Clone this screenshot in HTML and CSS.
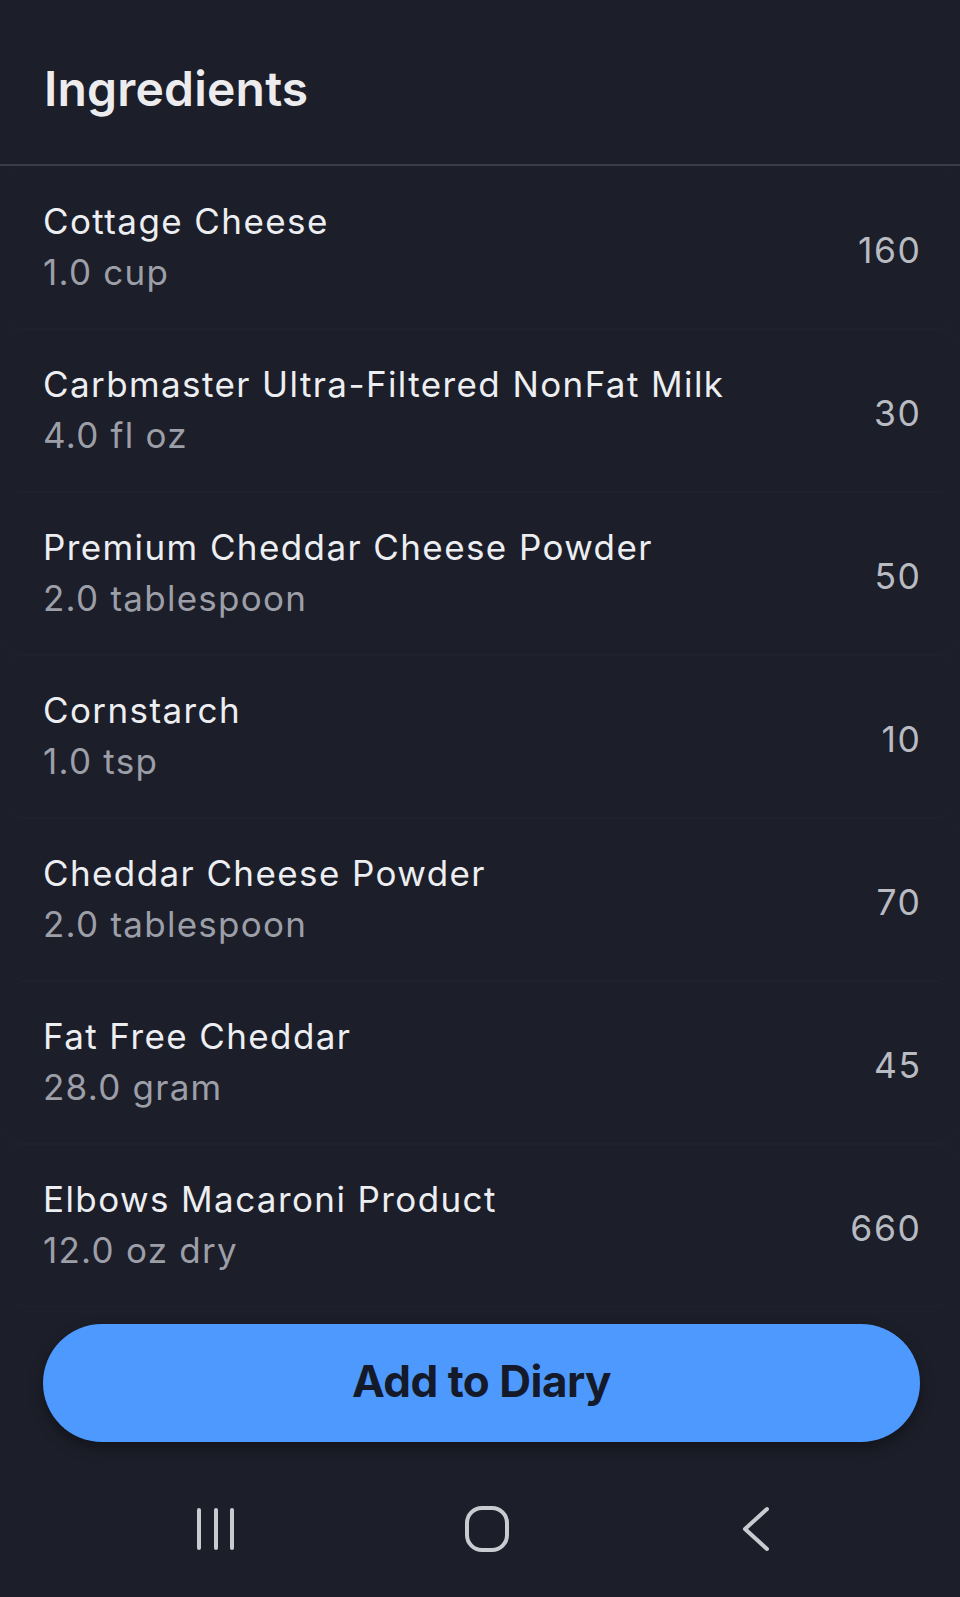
FILE: index.html
```html
<!DOCTYPE html>
<html lang="en">
<head>
<meta charset="utf-8">
<title>Ingredients</title>
<link rel="stylesheet" href="styles.css">
</head>
<body>
<div class="screen">
  <header class="header">
    <h1 class="title">Ingredients</h1>
  </header>
  <ul class="list">
    <li class="row"><div class="info"><div class="name">Cottage Cheese</div><div class="amount">1.0 cup</div></div><div class="cal">160</div></li>
    <li class="row"><div class="info"><div class="name">Carbmaster Ultra-Filtered NonFat Milk</div><div class="amount">4.0 fl oz</div></div><div class="cal">30</div></li>
    <li class="row"><div class="info"><div class="name">Premium Cheddar Cheese Powder</div><div class="amount">2.0 tablespoon</div></div><div class="cal">50</div></li>
    <li class="row"><div class="info"><div class="name">Cornstarch</div><div class="amount">1.0 tsp</div></div><div class="cal">10</div></li>
    <li class="row"><div class="info"><div class="name">Cheddar Cheese Powder</div><div class="amount">2.0 tablespoon</div></div><div class="cal">70</div></li>
    <li class="row"><div class="info"><div class="name">Fat Free Cheddar</div><div class="amount">28.0 gram</div></div><div class="cal">45</div></li>
    <li class="row"><div class="info"><div class="name">Elbows Macaroni Product</div><div class="amount">12.0 oz dry</div></div><div class="cal">660</div></li>
  </ul>
  <div class="actions">
    <button class="add-btn">Add to Diary</button>
  </div>
  <nav class="navbar">
    <svg class="nav-icon" width="44" height="44" viewBox="0 0 44 44" aria-label="Recent apps">
      <g stroke="#c9cbd1" stroke-width="4" stroke-linecap="round" fill="none">
        <line x1="4" y1="3" x2="4" y2="41"/>
        <line x1="21" y1="3" x2="21" y2="41"/>
        <line x1="37" y1="3" x2="37" y2="41"/>
      </g>
    </svg>
    <svg class="nav-icon home" width="46" height="46" viewBox="0 0 46 46" aria-label="Home">
      <rect x="3" y="2" width="40" height="42" rx="15" ry="15" stroke="#c9cbd1" stroke-width="4" fill="none"/>
    </svg>
    <svg class="nav-icon" width="30" height="46" viewBox="0 0 30 46" aria-label="Back">
      <polyline points="26,3 4,23 26,43" stroke="#c9cbd1" stroke-width="4" stroke-linecap="round" stroke-linejoin="round" fill="none"/>
    </svg>
  </nav>
</div>
</body>
</html>
```

FILE: styles.css
```css
* { box-sizing: border-box; }

html, body {
  margin: 0;
  padding: 0;
  background: #1c1e29;
}

body {
  font-family: Inter, "Noto Sans", "Liberation Sans", sans-serif;
  color: #e8e9ed;
}

.screen {
  width: 960px;
  height: 1597px;
  display: flex;
  flex-direction: column;
  overflow: hidden;
}

.header {
  height: 166px;
  flex-shrink: 0;
  border-bottom: 2px solid #3a3d49;
  padding: 0 44px;
}

.title {
  margin: 0;
  padding-top: 60px;
  font-size: 48px;
  line-height: 1.21;
  font-weight: 600;
  color: #ececef;
  letter-spacing: 0.2px;
}

.list {
  list-style: none;
  margin: 0;
  padding: 0;
}

.row {
  height: 163px;
  display: flex;
  align-items: center;
  justify-content: space-between;
  padding: 0 43px 0 46px;
  border: 1px solid rgba(255, 255, 255, 0.015);
  border-radius: 30px;
  margin: 0 -4px;
}

.info {
  display: flex;
  flex-direction: column;
  padding-bottom: 1px;
}

.name {
  font-size: 35px;
  line-height: 51px;
  color: #eceef1;
  letter-spacing: 1.4px;
}

.amount {
  font-size: 35px;
  line-height: 51px;
  color: #9c9fa8;
  letter-spacing: 1.25px;
}

.cal {
  font-size: 35.5px;
  line-height: 51px;
  color: #b9bbc2;
  padding-top: 5px;
  letter-spacing: 1.6px;
  margin-right: -1.6px;
}

.actions {
  padding: 17px 40px 0 43px;
}

.add-btn {
  width: 100%;
  height: 118px;
  border: none;
  border-radius: 59px;
  background: #4e99fd;
  color: #141a2a;
  font-family: Inter, "Noto Sans", "Liberation Sans", sans-serif;
  font-size: 44px;
  font-weight: 700;
  letter-spacing: -0.5px;
  box-shadow: 0 6px 14px rgba(0, 0, 0, 0.35);
  padding: 0 0 4px;
}

.navbar {
  flex: 1;
  display: flex;
  align-items: center;
  justify-content: space-between;
  padding: 18px 189px 0 195px;
}

.nav-icon {
  display: block;
}

.home {
  margin-right: 6px;
}
```
